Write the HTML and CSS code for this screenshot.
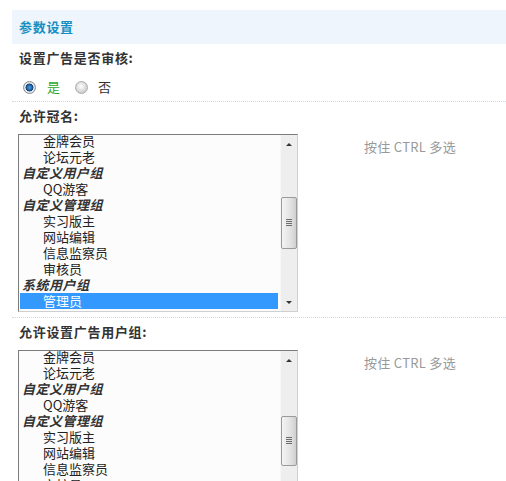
FILE: index.html
```html
<!DOCTYPE html>
<html lang="zh-CN">
<head>
<meta charset="utf-8">
<title>参数设置</title>
<link rel="stylesheet" href="styles.css">
</head>
<body>
<div class="panel">
  <div class="head">参数设置</div>

  <div class="section">
    <div class="label">设置广告是否审核:</div>
    <div class="radios">
      <span class="radio on"></span><span class="opt yes">是</span>
      <span class="radio off"></span><span class="opt no">否</span>
    </div>
  </div>

  <div class="section">
    <div class="label">允许冠名:</div>
    <div class="field">
      <div class="listbox">
        <div class="items">
          <div class="item">金牌会员</div>
          <div class="item">论坛元老</div>
          <div class="group">自定义用户组</div>
          <div class="item">QQ游客</div>
          <div class="group">自定义管理组</div>
          <div class="item">实习版主</div>
          <div class="item">网站编辑</div>
          <div class="item">信息监察员</div>
          <div class="item">审核员</div>
          <div class="group">系统用户组</div>
          <div class="item sel">管理员</div>
        </div>
        <div class="sbar">
          <span class="arrow up"></span>
          <span class="thumb"><span class="grip"></span></span>
          <span class="arrow down"></span>
        </div>
      </div>
      <div class="hint">按住 CTRL 多选</div>
    </div>
  </div>

  <div class="section">
    <div class="label">允许设置广告用户组:</div>
    <div class="field">
      <div class="listbox">
        <div class="items">
          <div class="item">金牌会员</div>
          <div class="item">论坛元老</div>
          <div class="group">自定义用户组</div>
          <div class="item">QQ游客</div>
          <div class="group">自定义管理组</div>
          <div class="item">实习版主</div>
          <div class="item">网站编辑</div>
          <div class="item">信息监察员</div>
          <div class="item">审核员</div>
          <div class="group">系统用户组</div>
          <div class="item sel">管理员</div>
        </div>
        <div class="sbar">
          <span class="arrow up"></span>
          <span class="thumb thumb2"><span class="grip"></span></span>
          <span class="arrow down"></span>
        </div>
      </div>
      <div class="hint">按住 CTRL 多选</div>
    </div>
  </div>
</div>
</body>
</html>
```

FILE: styles.css
```css
html, body {
  margin: 0;
  padding: 0;
  background: #ffffff;
}
body {
  font-family: "Noto Sans CJK SC", "DejaVu Sans", sans-serif;
  font-size: 13px;
  color: #333333;
}
.panel {
  margin: 10px 0 0 12px;
}
.head {
  height: 34px;
  line-height: 34px;
  padding-left: 7px;
  background: #eef5fc;
  color: #1690c2;
  font-weight: bold;
  font-size: 13px;
  letter-spacing: 0.7px;
}
.section {
  padding: 6px 0 6px 7px;
  border-bottom: 1px dotted #c4dbe9;
}
.section + .section {
  padding-top: 6px;
  padding-bottom: 5px;
}
.label {
  line-height: 16px;
  font-weight: bold;
  color: #333333;
  letter-spacing: 0.7px;
}
.radios {
  display: flex;
  align-items: center;
  margin-top: 13px;
  height: 16px;
}
.radio {
  width: 13px;
  height: 13px;
  border-radius: 50%;
  box-sizing: border-box;
  flex: none;
}
.radio.on {
  margin-left: 4px;
  border: 1px solid #8a8f94;
  background: radial-gradient(circle at 50% 50%, #4a9ae0 0, #1f66a6 2.6px, #0e3a66 3.8px, #e9edf1 4.2px, #d2d7dc 6px);
}
.radio.off {
  margin-left: 15px;
  border: 1px solid #a9adb1;
  background: radial-gradient(circle at 45% 40%, #ffffff 0, #e8e8e8 3px, #cfcfcf 6px);
}
.opt {
  line-height: 16px;
}
.opt.yes {
  margin-left: 11px;
  color: #2aa82a;
}
.opt.no {
  margin-left: 10px;
  color: #333333;
}
.field {
  display: flex;
  align-items: flex-start;
  margin-top: 10px;
  margin-left: -1px;
}
.listbox {
  width: 280px;
  height: 178px;
  box-sizing: border-box;
  border-top: 1px solid #7c7c7c;
  border-left: 1px solid #7c7c7c;
  border-right: 1px solid #cfcfcf;
  border-bottom: 1px solid #cfcfcf;
  background: #fcfcfc;
  display: flex;
  overflow: hidden;
  flex: none;
}
.items {
  flex: 1;
  margin-top: -2px;
  padding: 0 2px 0 1px;
  overflow: hidden;
}
.item, .group {
  height: 16px;
  line-height: 16px;
  white-space: nowrap;
  color: #222222;
}
.item {
  padding-left: 23px;
}
.group {
  padding-left: 2px;
  font-weight: bold;
  font-style: italic;
  color: #333333;
  letter-spacing: 0.5px;
}
.item.sel {
  background: #3399ff;
  color: #ffffff;
}
.sbar {
  width: 17px;
  flex: none;
  background: #eeeeee;
  border-left: 1px solid #f7f7f7;
  box-sizing: border-box;
  position: relative;
}
.arrow {
  position: absolute;
  left: 5px;
  width: 0;
  height: 0;
  border-left: 3px solid transparent;
  border-right: 3px solid transparent;
}
.arrow.up {
  top: 8px;
  border-bottom: 3px solid #333333;
}
.arrow.down {
  bottom: 7px;
  border-top: 3px solid #333333;
}
.thumb {
  position: absolute;
  left: 0;
  top: 62px;
  width: 16px;
  height: 52px;
  box-sizing: border-box;
  border: 1px solid #9a9a9a;
  border-radius: 2px;
  background: linear-gradient(to right, #f4f4f4, #e2e2e2 60%, #cfcfcf);
}
.thumb2 {
  top: 65px;
  height: 50px;
}
.grip {
  position: absolute;
  left: 4px;
  top: 50%;
  width: 6px;
  height: 7px;
  margin-top: -4px;
  background: repeating-linear-gradient(to bottom, #6b6b6b 0, #6b6b6b 1px, transparent 1px, transparent 2px);
}
.hint {
  margin-left: 66px;
  margin-top: 5px;
  line-height: 16px;
  color: #999999;
  white-space: nowrap;
  letter-spacing: 0.3px;
}
```
